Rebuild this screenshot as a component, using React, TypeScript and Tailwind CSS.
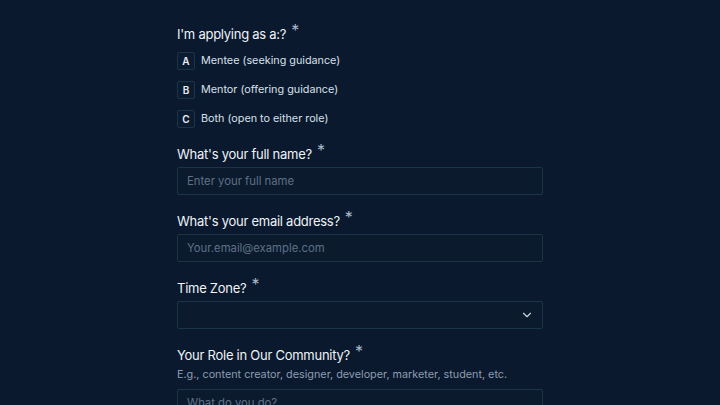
import { ChevronDown } from 'lucide-react';

const options = [
  { key: 'A', label: 'Mentee (seeking guidance)' },
  { key: 'B', label: 'Mentor (offering guidance)' },
  { key: 'C', label: 'Both (open to either role)' },
];

const Label = ({ children }: { children: React.ReactNode }) => (
  <div className="flex items-start text-[13px] leading-5 tracking-[-0.02em] text-[#eef3f8]">
    <span>{children}</span>
    <span className="ml-[5px] -mt-[4px] text-[16px] text-[#a9b8c9]">*</span>
  </div>
);

const TextInput = ({ placeholder }: { placeholder: string }) => (
  <input
    placeholder={placeholder}
    className="h-[28px] w-full rounded-[2px] border border-[#1c3447] bg-[#0b1a2d] px-[9px] text-[11.3px] text-[#e6edf5] outline-none placeholder:text-[#5f7186]"
  />
);

export default function App() {
  return (
    <div
      className="h-[405px] w-[720px] overflow-hidden bg-[#0a192e]"
      style={{ fontFamily: 'Inter, "Noto Sans", sans-serif' }}
    >
      <div className="mx-auto flex w-[366px] flex-col pt-[24px]">
        <Label>I'm applying as a:?</Label>
        <div className="mt-[8px] flex flex-col gap-[11px]">
          {options.map((o) => (
            <div key={o.key} className="flex items-center gap-[6px]">
              <div className="flex h-[18px] w-[18px] items-center justify-center rounded-[2px] border border-[#1c3447] bg-[#0c1c30] text-[10px] font-semibold text-[#e6edf5]">
                {o.key}
              </div>
              <span className="text-[10.8px] text-[#d8e0ea]">{o.label}</span>
            </div>
          ))}
        </div>

        <div className="mt-[16px]">
          <Label>What's your full name?</Label>
        </div>
        <div className="mt-[3px]">
          <TextInput placeholder="Enter your full name" />
        </div>

        <div className="mt-[16px]">
          <Label>What's your email address?</Label>
        </div>
        <div className="mt-[3px]">
          <TextInput placeholder="Your.email@example.com" />
        </div>

        <div className="mt-[16px]">
          <Label>Time Zone?</Label>
        </div>
        <div className="mt-[3px] flex h-[28px] w-full items-center justify-end rounded-[2px] border border-[#1c3447] bg-[#0b1a2d] px-[8px]">
          <ChevronDown className="h-[14px] w-[14px] text-[#c9d4e0]" strokeWidth={2} />
        </div>

        <div className="mt-[16px]">
          <Label>Your Role in Our Community?</Label>
        </div>
        <p className="mt-[2px] text-[10.8px] leading-4 text-[#8d9cae]">
          E.g., content creator, designer, developer, marketer, student, etc.
        </p>
        <div className="mt-[6px]">
          <TextInput placeholder="What do you do?" />
        </div>
      </div>
    </div>
  );
}
